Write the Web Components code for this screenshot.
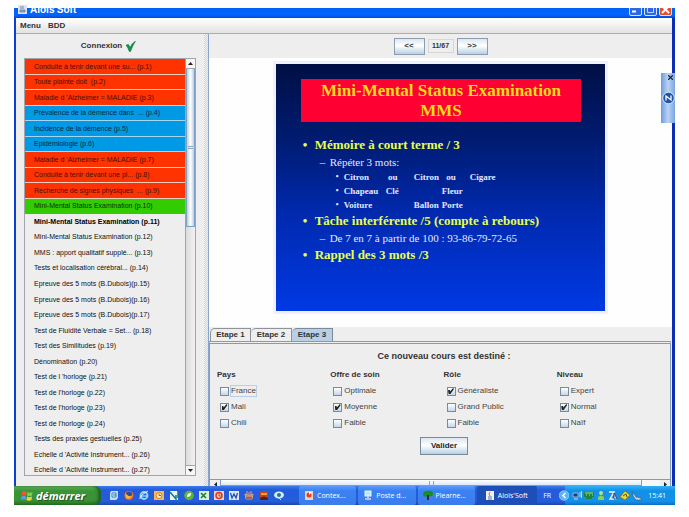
<!DOCTYPE html>
<html lang="fr">
<head>
<meta charset="utf-8">
<title>Aloïs'Soft</title>
<style>
html,body{margin:0;height:100%;background:#fff}
body{box-sizing:border-box;height:100vh;padding:8px 14px 12px;font-family:"Liberation Sans",Arial,sans-serif;color:#222;display:flex;flex-direction:column}
</style>
</head>
<body>
<alois-desktop></alois-desktop>
<script>
const base = `*{box-sizing:border-box}button,input{font:inherit;color:inherit;margin:0}`;
function define(name, render) {
  customElements.define(name, class extends HTMLElement {
    connectedCallback() {
      if (this.shadowRoot) return;
      const t = document.createElement('template');
      t.innerHTML = render(this);
      this.attachShadow({mode: 'open'}).append(t.content.cloneNode(true));
    }
  });
}

define('window-title', () => `<style>${base}
:host{display:flex;height:10px;flex:none;background:linear-gradient(#0062f4,#0066ff 70%,#0449cf);justify-content:space-between;align-items:flex-end;padding:0 3px 0 4px;color:#fff}
.name{display:flex;gap:3px;align-items:flex-end;height:10px}
h1{margin:0;font:bold 10px/12px "Liberation Sans",sans-serif;padding-bottom:2px}
.name svg{margin-bottom:4px}
.btns{display:flex;gap:2px;align-items:flex-end;height:10px;padding-bottom:2px;overflow:hidden}
button{display:block;width:13px;height:13px;padding:0;border:1px solid #d7e4ff;border-radius:2px;background:#2d68e6;flex:none}
button.x{background:#e5512b}
button svg{display:block}
</style>
<div class="name"><svg width="9" height="9" viewBox="0 0 9 9"><rect width="9" height="9" fill="#dbe4f4"/><path d="M2 5h5v2H2zM3 1v3M5 1v3" stroke="#7888a8" fill="#8fa3c8"/></svg><h1>Aloïs'Soft</h1></div>
<div class="btns">
<button aria-label="Réduire"><svg width="11" height="11"><path d="M2 7.500h4" stroke="#fff" stroke-width="2"/></svg></button>
<button aria-label="Agrandir"><svg width="11" height="11"><path d="M2.500 2.500h6v6h-6z" fill="none" stroke="#c3d7ff"/></svg></button>
<button class="x" aria-label="Fermer"><svg width="11" height="11"><path d="M2 2l7 7M9 2l-7 7" stroke="#fff" stroke-width="2"/></svg></button></div>`);

define('menu-bar', () => `<style>${base}
:host{display:flex;flex:none;height:16px;gap:7px;padding:0 4px;background:linear-gradient(#fff,#e2e2e2);border-bottom:1px solid #a9adb8}
button{border:0;background:none;padding:0;font:bold 8px/14px "Liberation Sans",sans-serif;color:#333}
</style><button>Menu</button><button>BDD</button>`);

const rows = [
['r','Conduite à tenir devant une su... (p.1)'],['r','Toute plainte doit  (p.2)'],["r","Maladie d 'Alzheimer = MALADIE (p.3)"],
['b','Prévalence de la démence dans  ... (p.4)'],['b','Incidence de la démence (p.5)'],['b','Epidémiologie (p.6)'],
["r","Maladie d 'Alzheimer = MALADIE (p.7)"],['r','Conduite à tenir devant une pl... (p.8)'],['r','Recherche de signes physiques  ... (p.9)'],
['g','Mini-Mental Status Examination (p.10)'],['cur','Mini-Mental Status Examination (p.11)'],['','Mini-Mental Status Examination (p.12)'],
['','MMS : apport qualitatif supplé... (p.13)'],['','Tests et localisation cérébral... (p.14)'],['','Epreuve des 5 mots (B.Dubois)(p.15)'],
['','Epreuve des 5 mots (B.Dubois)(p.16)'],['','Epreuve des 5 mots (B.Dubois)(p.17)'],['','Test de Fluidité Verbale = Set... (p.18)'],
['','Test des Similitudes (p.19)'],['','Dénomination (p.20)'],['',"Test de l 'horloge (p.21)"],['',"Test de l'horloge (p.22)"],
['',"Test de l'horloge (p.23)"],['',"Test de l'horloge (p.24)"],['','Tests des praxies gestuelles (p.25)'],
['',"Echelle d 'Activité Instrument... (p.26)"],['',"Echelle d 'Activité Instrument... (p.27)"]];

define('course-list', () => `<style>${base}
:host{display:flex;flex-direction:column;min-width:0;min-height:0;background:#eee;padding:0 8px 10px}
header{height:24px;flex:none;display:flex;justify-content:center;align-items:center;gap:4px;padding-right:3px;font:bold 8px/12px "Liberation Sans",sans-serif;color:#333}
.box{flex:1;min-height:0;display:flex;border:1px solid #a0a4ac;overflow:hidden}
ul{flex:1;min-width:0;list-style:none;margin:0;padding:0;height:calc(100% + 3px);display:grid;grid-auto-rows:1fr;font-size:7px;color:#111}
li{display:flex;align-items:center;padding-left:9px;white-space:pre;overflow:hidden;min-height:0;border-bottom:1px solid transparent}
.r,.b{border-color:#f3cdbb}.b{border-color:#a5d8f0}
.r{background:#ff3300;color:#4a0f00}.b{background:#0099e5;color:#02283f}.g{background:#33cc00;color:#0a3000}
.cur{font-weight:bold;color:#000}
.bar{width:10px;flex:none;border-left:1px solid #a0a4ac;display:flex;flex-direction:column;background:linear-gradient(90deg,#dcdcdc,#f2f2f2)}
.bar button{height:10px;flex:none;border:0;border-bottom:1px solid #a0a4ac;background:#f6f6f6;padding:0;display:grid;place-items:center}
.bar button:last-child{border-top:1px solid #a0a4ac;border-bottom:0}
.thumb{flex:0 0 38%;border:1px solid #7f9fc2;border-top:0;background:linear-gradient(90deg,#b8cfe5,#fff 50%,#b8cfe5);display:grid;place-items:center}
.thumb i{width:5px;height:3px;border:solid #8ba5c4;border-width:1px 0}
.gap{flex:1}
</style>
<header>Connexion <svg width="10" height="11" viewBox="0 0 10 11"><path d="M0 4L2.500 3.500 4 6.500Q5.500 2.500 9.500 0 7 4 4.500 10.500H3.300Q2 6.500 0 4z" fill="#12924c" stroke="#0a6b34" stroke-width=".5"/></svg></header>
<div class="box"><ul>${rows.map(([c,t])=>`<li class="${c}">${t}</li>`).join('')}</ul>
<div class="bar"><button aria-label="Haut"><svg width="5" height="3"><path d="M0 3L2.500 0 5 3z" fill="#222"/></svg></button><div class="thumb"><i></i></div><div class="gap"></div><button aria-label="Bas"><svg width="5" height="3"><path d="M0 0h5L2.500 3z" fill="#222"/></svg></button></div></div>`);

define('page-nav', () => `<style>${base}
:host{display:flex;flex:none;height:24px;justify-content:center;align-items:center;gap:3px;background:#eee;font:bold 8px/12px "Liberation Sans",sans-serif;color:#333}
button{width:31px;height:17px;padding:0;border:1px solid #8d9cae;background:linear-gradient(#dbe6f1,#fff 45%,#b8cfe5)}
output{padding:0 2px;width:26px;text-align:center;border:1px solid #d6d6d6;white-space:nowrap;font-size:7px}
</style><button>&lt;&lt;</button><output>11/67</output><button>&gt;&gt;</button>`);

define('slide-view', () => `<style>${base}
:host{display:flex;flex:1;min-height:0;justify-content:center;background:#fefefe;padding:3px 0 13px}
article{aspect-ratio:337/254;height:100%;border:solid #eff1fb;border-width:3px;background:linear-gradient(#000f44,#001b70 30%,#0029ad 60%,#0039e4);color:#e4e9ff;font-family:"Liberation Serif","Times New Roman",serif;padding:15px 24px 0 25px}
h2{margin:0 0 14px;background:#ff0033;color:#ffdc19;font-size:17px;line-height:20px;font-weight:bold;text-align:center;padding:2px 0 1px;white-space:nowrap}
p{margin:0;display:flex;white-space:nowrap}
p::before{flex:none}
.a{font-size:13px;line-height:18px;font-weight:bold;color:#e8ff4f;padding-left:2px}
.a::before{content:"•";width:12px;font-size:13px}
.b{font-size:11px;line-height:16px;padding-left:19px}
.b::before{content:"–";width:10px}
.c{font-size:9px;line-height:14px;font-weight:bold;padding-left:35px}
.c::before{content:"•";width:8px;font-size:8px}
.c span{flex:0 0 28px;white-space:pre}.c span:first-child{flex-basis:42px}
</style><article><h2>Mini-Mental Status Examination<br>MMS</h2>
<p class="a">Mémoire à court terme / 3</p>
<p class="b">Répéter 3 mots:</p>
<p class="c"><span>Citron</span><span> ou</span><span>Citron</span><span>  ou</span><span>Cigare</span></p>
<p class="c"><span>Chapeau</span><span>Clé</span><span></span><span>Fleur</span></p>
<p class="c"><span>Voiture</span><span></span><span>Ballon</span><span>Porte</span></p>
<p class="a">Tâche interférente /5 (compte à rebours)</p>
<p class="b">De 7 en 7 à partir de 100 : 93-86-79-72-65</p>
<p class="a">Rappel des 3 mots /3</p></article>`);

define('check-group', el => `<style>${base}
:host{display:block;min-width:0}
fieldset{border:0;margin:0;padding:0;min-width:0}
legend{padding:0;font:bold 8px/12px "Liberation Sans",sans-serif;margin-bottom:2px;color:#333}
label{display:flex;align-items:center;gap:2px;height:16px;padding-left:3px;font-size:8px;line-height:10px;color:#444;white-space:nowrap}
input{appearance:none;width:9px;height:9px;border:1px solid #7a8a99;background:linear-gradient(#fff,#c3d6e9);display:grid;place-items:center}
input:checked::before{content:"";width:6px;height:6px;background:#222;clip-path:polygon(0 35%,30% 35%,35% 60%,85% 0,100% 15%,40% 100%,10% 100%)}
label.f span{outline:1px solid #b8cfe5}
</style><fieldset><legend>${el.getAttribute('name')}</legend>${el.getAttribute('items').split(',').map((t,i)=>`<label class="${el.getAttribute('focus')==i?'f':''}"><input type="checkbox"${el.getAttribute('checked')==i?' checked':''}><span>${t}</span></label>`).join('')}</fieldset>`);

define('step-tabs', () => `<style>${base}
:host{display:flex;flex-direction:column;flex:none;background:#eee;padding-top:1px}
nav{display:flex;padding-left:1px}
nav button{height:13px;width:41px;border:1px solid #8e9299;border-bottom:0;border-left-width:0;border-top-left-radius:5px;background:#eee;padding:0;font:bold 8px/12px "Liberation Sans",sans-serif;color:#333}
nav button:first-child{border-left-width:1px}
nav button[aria-selected=true]{background:#b8cfe5;border-color:#7a8a99}
section{border:1px solid #7f9dc4;border-top:3px double #7a9bd0;border-bottom:0;margin-right:1px;padding-top:6px}
h3{margin:0 0 7px;padding-left:8px;font:bold 9px/12px "Liberation Sans",sans-serif;text-align:center;color:#333}
.cols{display:grid;grid-template-columns:repeat(4,1fr);padding-left:7px}
.go{display:flex;justify-content:center;padding:6px 0 24px 8px}
.go button{width:48px;height:18px;padding:0;border:1px solid #7a8a99;background:linear-gradient(#dbe6f1,#fff 45%,#b8cfe5);font:bold 8px/12px "Liberation Sans",sans-serif}
.h{display:flex;height:7px;border-top:1px solid #7f9dc4;background:#f8f8f8;overflow:hidden}
.h button{width:10px;height:9px;flex:none;border:0;padding:0;background:#eee;display:grid;place-items:center}
.h i{flex:24;border:1px solid #7f9fc2;border-top:0;background:linear-gradient(#fff,#dce8f5);display:grid;place-items:center}
.h i::before{content:"";width:3px;height:4px;border:solid #8ba5c4;border-width:0 1px}
.h b{flex:1}
</style><nav role="tablist"><button role="tab">Etape 1</button><button role="tab">Etape 2</button><button role="tab" aria-selected="true">Etape 3</button></nav>
<section><h3>Ce nouveau cours est destiné :</h3>
<div class="cols"><check-group name="Pays" items="France,Mali,Chili" checked="1" focus="0"></check-group><check-group name="Offre de soin" items="Optimale,Moyenne,Faible" checked="1"></check-group><check-group name="Rôle" items="Généraliste,Grand Public,Faible" checked="0"></check-group><check-group name="Niveau" items="Expert,Normal,Naïf" checked="1"></check-group></div>
<div class="go"><button>Valider</button></div>
<div class="h"><button aria-label="Gauche"><svg width="3" height="5"><path d="M3 0v5L0 2.500z" fill="#222"/></svg></button><i></i><b></b><button aria-label="Droite"><svg width="3" height="5"><path d="M0 0v5l3-2.500z" fill="#222"/></svg></button></div></section>`);

const ic = b => `<svg width="10" height="11" viewBox="0 0 10 11">${b}</svg>`;
const quick = [
ic('<path d="M2 1h7v7l-2 2H1V3z" fill="#b9e1f7"/><path d="M3 3h4v4H3z" fill="#fff" stroke="#377fc2"/><path d="M4 5h3" stroke="#2d62b0"/>'),
ic('<circle cx="5" cy="5.500" r="4.500" fill="#ef6d1c"/><path d="M2 3Q5 0 8 3 8 6 5 7 2 6 2 3z" fill="#294e9c"/><path d="M1 2Q3 7 8 6 6 10 2 8z" fill="#ffb43a"/>'),
ic('<circle cx="5" cy="5.500" r="3.500" fill="none" stroke="#8fdcff" stroke-width="1.800"/><path d="M2 6h6M1 9Q0 6 9 1" stroke="#dff5ff" fill="none"/>'),
ic('<rect y="1" width="10" height="9" fill="#f5b85a"/><circle cx="5" cy="5.500" r="3" fill="#fff1cd" stroke="#dc7d17"/><path d="M5 3.500v2h2" fill="none" stroke="#a65a11"/>'),
ic('<rect x="1" y="1" width="8" height="9" fill="#e8f5f8"/><path d="M1 2l6 7V5M9 1v7" stroke="#157a83" stroke-width="1.500" fill="none"/>'),
ic('<circle cx="5" cy="5.500" r="4.700" fill="#62b537"/><path d="M3 7Q3 3 7 3 7 7 3 7z" fill="#fff"/>'),
ic('<rect y="1" width="10" height="9" fill="#d9f0d4"/><path d="M2 3l5 5M7 3L2 8" stroke="#1a7d37" stroke-width="1.600"/>'),
ic('<rect y="1" width="10" height="9" fill="#f8cfc2"/><circle cx="5" cy="5.500" r="3" fill="none" stroke="#d43d24" stroke-width="1.500"/><path d="M5 3v3h3" stroke="#d43d24" fill="none"/>'),
ic('<rect y="1" width="10" height="9" fill="#dbe8ff"/><path d="M1.500 3L3 8l2-4 2 4 1.500-5" stroke="#2451b4" stroke-width="1.300" fill="none"/>'),
ic('<path d="M1 4Q5 7 9 4L8 9H2zM3 5V1M5 5V2M7 5V1" fill="#c18a70" stroke="#d9a287"/><path d="M2 8h6" stroke="#744331"/>'),
ic('<rect x="1" y="1" width="8" height="9" fill="#c84219"/><path d="M2 3h6v2H2z" fill="#f0a23a"/><path d="M1 8Q5 5 9 8v2H1z" fill="#53201a"/>'),
ic('<ellipse cx="5" cy="5" rx="5" ry="3.500" fill="#d5effa"/><circle cx="5" cy="5" r="2" fill="#277097"/><path d="M5 8l2 2" stroke="#c9e8f6"/>')];
const tasks = [
['Contex...',ic('<rect x="1" y="1" width="8" height="9" fill="#f5d0bd"/><circle cx="5" cy="5" r="2.500" fill="#d84324"/><path d="M5 5V2h3" fill="#fff"/>')],
['Poste d...',ic('<rect x="2" y="1" width="6" height="5" fill="#b9e6ff" stroke="#e9f6ff"/><path d="M5 6v2M2 9h6" stroke="#d0dbea" stroke-width="1.500"/>')],
['Plearne...',ic('<path d="M0 5Q0 1 4 1 10 0 10 4 10 7 5 6 1 8 0 5z" fill="#159021"/><path d="M5 5v5" stroke="#3c2c18" stroke-width="2"/>')],
["Aloïs'Soft",ic('<rect x="1" y="1" width="8" height="9" fill="#f4efe8"/><path d="M5 2Q3 4 5 6" stroke="#d56a28" fill="none"/><path d="M3 7h4M3 9h4" stroke="#5a7da2"/>')]];
const tray = [
ic('<path d="M1 3h5v4H1z" fill="#183d79" stroke="#9ab5cf"/><path d="M2 9h4M8 2v5M9.500 1v7" stroke="#b7d9ed"/>'),
ic('<path d="M0 2h10v5H8v2H2V7H0z" fill="#21833f"/><path d="M1 3h8M2 5h1M5 5h1M8 5h1" stroke="#9de5a1"/>'),
ic('<circle cx="5" cy="3" r="2" fill="#b5e56c"/><path d="M2 7Q5 4 8 7v3H2z" fill="#8bd04c"/>'),
ic('<path d="M1 2h5L2 9h7" stroke="#eef3fa" stroke-width="1.500" fill="none"/><path d="M6 3l3 6H6z" fill="#eef3fa" stroke="#1b315f" stroke-width=".8"/>'),
ic('<path d="M0 7l5-6 5 4-5 5z" fill="#ead52c" stroke="#716c13" stroke-width=".6"/><path d="M3 6l3-2 1 3" stroke="#4d5b17" fill="none"/>'),
ic('<path d="M1 2l3 5 5 1v2H4L1 6z" fill="#d0d5da" stroke="#36536f" stroke-width=".6"/>')];

define('task-bar', () => `<style>${base}
:host{display:flex;flex:none;height:19px;background:linear-gradient(#3d7bea,#235bdc 20%,#245edb 80%,#1b46ad);color:#fff;font:7px/19px "Open Sans","Liberation Sans",sans-serif;align-items:stretch}
button{border:0;padding:0;background:none;color:inherit}
.start{width:87px;flex:none;border-radius:0 6px 6px 0;background:linear-gradient(#66b162,#3a9537 25%,#3a9237 75%,#24701f);box-shadow:inset -3px 0 3px #1e6420;display:flex;align-items:center;gap:3px;padding-left:7px;font:italic bold 11px/18px "Open Sans","Liberation Sans",sans-serif;text-shadow:1px 1px 1px #1c4f1b}
.q{display:flex;gap:5px;align-items:center;padding:0 15px 0 8px;flex:none}
svg{display:block}
.q button{width:10px;flex:none}
.tasks{flex:1;min-width:0;display:flex;gap:2px}
.tasks button{flex:1;min-width:0;display:flex;align-items:center;gap:3px;padding-left:5px;border-radius:2px;background:linear-gradient(#5c9bfb,#3c81f3 25%,#3a7cec);white-space:nowrap;font:7px/14px "Open Sans",sans-serif;overflow:hidden}
.tasks button:last-child{background:#1e4fb8;padding-left:8px}
.fr{width:20px;text-align:center;flex:none}
.tray{display:flex;align-items:center;gap:2px;background:linear-gradient(#2fb1f3,#1290e9 25%,#1490e8 80%,#0d6fc4);padding-right:9px;flex:none;margin-left:8px}
.tray .c{margin-left:-6px;margin-right:1px;width:10px}
time{margin-left:4px}
</style><button class="start"><svg width="12" height="12" viewBox="0 0 12 12"><path d="M1 2Q3 0 5.500 2L5 5.500Q3 4 .5 5.500z" fill="#ed5833"/><path d="M6.500 2Q9 3.500 11.500 2L11 5.500Q8.500 7 6 5.500z" fill="#84cb41"/><path d="M.5 6.500Q3 5 5 6.500L4.500 10Q2.500 8.500 0 10z" fill="#5b9dea"/><path d="M6 6.500Q8.500 8 11 6.500L10.500 10Q8 11.500 5.500 10z" fill="#f8cf36"/></svg>démarrer</button>
<div class="q">${quick.map((s,i)=>`<button aria-label="Lancement rapide ${i+1}">${s}</button>`).join('')}</div>
<div class="tasks">${tasks.map(([t,s])=>`<button>${s}${t}</button>`).join('')}</div>
<span class="fr">FR</span>
<div class="tray"><button class="c" aria-label="Icônes masquées">${ic('<circle cx="5" cy="5.500" r="4.800" fill="#5eb1fb" stroke="#b7deff" stroke-width=".6"/><path d="M6.500 3L4 5.500 6.500 8" stroke="#fff" stroke-width="1.500" fill="none"/>')}</button>${tray.join('')}<time>15:41</time></div>`);

define('side-dock', () => `<style>${base}
:host{position:absolute;right:0;top:65px;width:14px;height:50px;background:linear-gradient(90deg,#6f9bdc,#b9d3f5 50%,#7ba5e0);display:flex;flex-direction:column;align-items:center}
button{align-self:flex-end;border:0;background:none;padding:2px 2px 0 0;height:18px;display:flex}svg{display:block}
</style><button aria-label="Fermer"><svg width="5" height="5"><path d="M0 0l5 5M5 0L0 5" stroke="#1b2b4c" stroke-width="1.300"/></svg></button>
<svg width="13" height="14" viewBox="0 0 13 14"><circle cx="6.500" cy="7" r="5.800" fill="#1d58a8" stroke="#dceaf9"/><path d="M4 9.500V5l5 4V4.500" stroke="#fff" stroke-width="1.300" fill="none"/></svg>`);

define('alois-desktop', () => `<style>${base}
:host{flex:1;min-height:0;display:flex;flex-direction:column;position:relative}
.frame{flex:1;min-height:0;display:flex;flex-direction:column;border:solid #0d3fd0;border-width:0 3px 0 2px;border-right-color:#0a2fb4}
main{flex:1;min-height:0;display:grid;grid-template-columns:188fr 5px 463fr;grid-template-rows:minmax(0,1fr)}
.split{background:repeating-conic-gradient(#cfd3d8 0 25%,#f4f4f4 0 50%) 0 0/2px 2px;border-right:1px solid #8aa2cc}
.work{display:flex;flex-direction:column;min-width:0;min-height:0}
</style><window-title></window-title><div class="frame"><menu-bar></menu-bar><main><course-list></course-list><div class="split"></div><div class="work"><page-nav></page-nav><slide-view></slide-view><step-tabs></step-tabs></div></main></div><task-bar></task-bar><side-dock></side-dock>`);
</script>
</body>
</html>
